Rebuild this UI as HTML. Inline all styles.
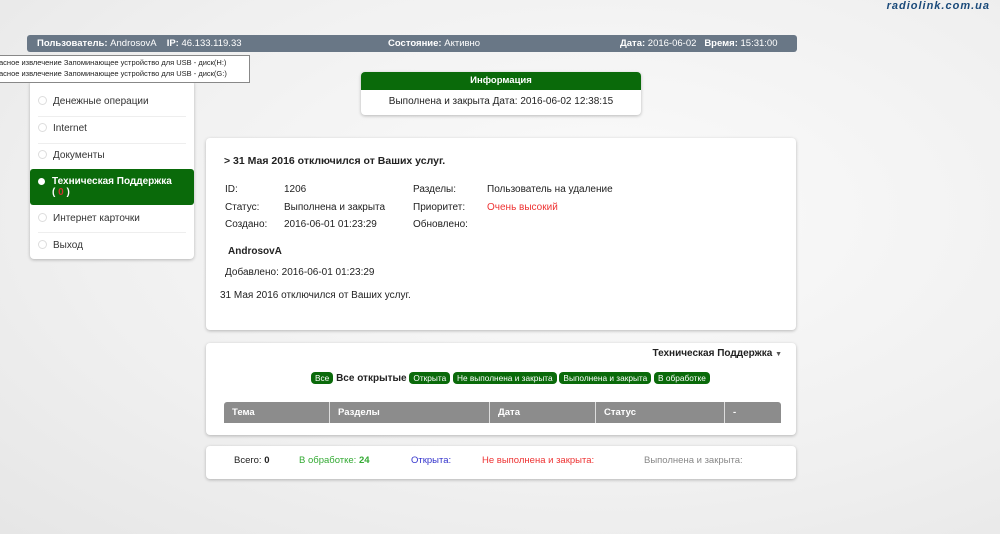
<!DOCTYPE html><html><head><meta charset="utf-8"><style>
body{margin:0;width:1000px;height:534px;overflow:hidden;background:radial-gradient(ellipse at 60% 40%,#fbfbfb 0%,#f0f0f0 60%,#e6e6e6 100%);font-family:"Liberation Sans","DejaVu Sans",sans-serif;font-size:10px;color:#222;position:relative}
.a{position:absolute}
.card{position:absolute;background:#fff;border-radius:4px;box-shadow:0 1px 3px rgba(0,0,0,.25)}
.g{background:#0a6a0a;color:#fff}
.mi{position:absolute;left:8px;font-size:10px;color:#333}
.dot{display:inline-block;width:7px;height:7px;border-radius:50%;border:1px solid #ddd;margin-right:6px;vertical-align:-1px}
.tag{background:#0a6a0a;color:#fff;border-radius:4px;padding:1px 4px;font-size:8.3px}
</style></head><body>
<div class="a" style="right:10px;top:0;font:italic bold 11px 'Liberation Sans';color:#1a4a7a;letter-spacing:1px">radiolink.com.ua</div>
<div class="a" style="left:27px;top:35px;width:770px;height:17px;background:#697786;border-radius:3px;color:#fff;font-size:9.5px;line-height:17px">
<span class="a" style="left:10px"><b>Пользователь:</b> AndrosovA &nbsp;&nbsp;&nbsp;<b>IP:</b> 46.133.119.33</span>
<span class="a" style="left:361px"><b>Состояние:</b> Активно</span>
<span class="a" style="left:593px"><b>Дата:</b> 2016-06-02 &nbsp;&nbsp;<b>Время:</b> 15:31:00</span></div>
<div class="card" style="left:30px;top:80px;width:164px;height:179px">
<div class="mi" style="top:16px"><span class="dot"></span>Денежные операции</div>
<div class="a" style="left:8px;right:8px;top:36px;border-top:1px solid #eee"></div>
<div class="mi" style="top:43px"><span class="dot"></span>Internet</div>
<div class="a" style="left:8px;right:8px;top:63px;border-top:1px solid #eee"></div>
<div class="mi" style="top:70px"><span class="dot"></span>Документы</div>
<div class="a g" style="left:0;top:89px;width:164px;height:36px;border-radius:3px;font-weight:bold;font-size:10px"><span class="a" style="left:8px;top:9px;width:7px;height:7px;border-radius:50%;background:#fff"></span><span class="a" style="left:22px;top:7px;line-height:11px">Техническая Поддержка<br>( <span style="color:#c33">0</span> )</span></div>
<div class="mi" style="top:133px"><span class="dot"></span>Интернет карточки</div>
<div class="a" style="left:8px;right:8px;top:152px;border-top:1px solid #eee"></div>
<div class="mi" style="top:160px"><span class="dot"></span>Выход</div>
</div>
<div class="a" style="left:-2px;top:55px;width:250px;height:25px;background:#fff;border:1px solid #888;font-size:7.5px;line-height:11px;padding-top:1px">асное извлечение Запоминающее устройство для USB - диск(H:)<br>асное извлечение Запоминающее устройство для USB - диск(G:)</div>
<div class="card" style="left:361px;top:72px;width:280px;height:43px;overflow:hidden">
<div class="g" style="height:18px;line-height:18px;text-align:center;font-weight:bold;font-size:9.5px">Информация</div>
<div style="text-align:center;line-height:24px;font-size:10px">Выполнена и закрыта Дата: 2016-06-02 12:38:15</div></div>
<div class="card" style="left:206px;top:138px;width:590px;height:192px">
<div class="a" style="left:18px;top:17px;font-weight:bold;font-size:10.5px">&gt; 31 Мая 2016 отключился от Ваших услуг.</div>
<div class="a" style="left:19px;top:43px;line-height:17.5px">ID:<br>Статус:<br>Создано:</div>
<div class="a" style="left:78px;top:43px;line-height:17.5px">1206<br>Выполнена и закрыта<br>2016-06-01 01:23:29</div>
<div class="a" style="left:207px;top:43px;line-height:17.5px">Разделы:<br>Приоритет:<br>Обновлено:</div>
<div class="a" style="left:281px;top:43px;line-height:17.5px">Пользователь на удаление<br><span style="color:#e33">Очень высокий</span></div>
<div class="a" style="left:22px;top:108px;font-weight:bold">AndrosovA</div>
<div class="a" style="left:19px;top:129px">Добавлено: 2016-06-01 01:23:29</div>
<div class="a" style="left:14px;top:152px">31 Мая 2016 отключился от Ваших услуг.</div>
</div>
<div class="card" style="left:206px;top:343px;width:590px;height:92px">
<div class="a" style="right:14px;top:5px;font-weight:bold;font-size:10px">Техническая Поддержка <span style="font-size:7px;color:#555">▼</span></div>
<div class="a" style="left:105px;top:30px;font-size:10px"><span class="tag">Все</span> <b>Все открытые</b> <span class="tag">Открыта</span> <span class="tag">Не выполнена и закрыта</span> <span class="tag">Выполнена и закрыта</span> <span class="tag">В обработке</span></div>
<div class="a" style="left:18px;top:59px;width:557px;height:21px;background:#8c8c8c;border-radius:3px 3px 0 0;color:#fff;font-weight:bold;font-size:9.5px;line-height:21px">
<span class="a" style="left:8px">Тема</span><span class="a" style="left:105px;top:0;height:21px;border-left:1px solid #ddd;padding-left:8px">Разделы</span><span class="a" style="left:265px;top:0;height:21px;border-left:1px solid #ddd;padding-left:8px">Дата</span><span class="a" style="left:371px;top:0;height:21px;border-left:1px solid #ddd;padding-left:8px">Статус</span><span class="a" style="left:500px;top:0;height:21px;border-left:1px solid #ddd;padding-left:8px">-</span></div>
</div>
<div class="card" style="left:206px;top:446px;width:590px;height:33px;line-height:29px;font-size:9.5px">
<span class="a" style="left:28px">Всего: <b>0</b></span>
<span class="a" style="left:93px;color:#3a3">В обработке: <b>24</b></span>
<span class="a" style="left:205px;color:#33c">Открыта:</span>
<span class="a" style="left:276px;color:#e33">Не выполнена и закрыта:</span>
<span class="a" style="left:438px;color:#888">Выполнена и закрыта:</span>
</div>
</body></html>
